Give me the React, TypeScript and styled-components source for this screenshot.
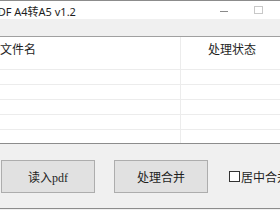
import React from "react";
import styled, { createGlobalStyle } from "styled-components";

const Global = createGlobalStyle`
  html, body { margin: 0; padding: 0; background: #f0f0f0; overflow: hidden; }
  #root { width: 280px; height: 210px; overflow: hidden; }
`;

const Window = styled.div`
  width: 318px;
  margin-left: -9px;
  display: flex;
  flex-direction: column;
  border-top: 1px solid #8c8c8c;
  border-bottom: 1px solid #8c8c8c;
  background: #f0f0f0;
  font-family: "Noto Sans CJK SC", "Noto Sans", sans-serif;
  color: #1e1e1e;
`;

const TitleBar = styled.div`
  height: 18px;
  background: #fff;
  display: flex;
  align-items: center;
  font-family: "Noto Sans", "Noto Sans CJK SC", sans-serif;
  font-size: 11px;
`;

const TitleText = styled.span`
  flex: 1;
  padding-top: 1px;
`;

const Caption = styled.div`
  width: 34px;
  display: flex;
  justify-content: center;
  align-items: center;
`;

const MinIcon = styled.div`
  width: 8px;
  height: 1px;
  background: #8a8a8a;
  margin-top: 2px;
`;

const MaxIcon = styled.div`
  width: 7px;
  height: 6px;
  border: 1px solid #c8c8c8;
`;

const MenuBand = styled.div`
  height: 17px;
  background: #f0f0f0;
  border-bottom: 1px solid #a0a0a0;
`;

const Table = styled.div`
  background: #fff;
  height: 106px;
  border-bottom: 1px solid #8c8c8c;
  display: grid;
  grid-template-columns: 190px 1fr;
  grid-template-rows: 33px repeat(5, 15px);
  overflow: hidden;
`;

const Cell = styled.div<{ $last?: boolean }>`
  border-right: ${(p) => (p.$last ? "none" : "1px solid #ececec")};
  border-bottom: 1px solid #ececec;
  box-sizing: border-box;
  font-size: 12px;
  line-height: 14px;
  padding-top: 5px;
`;

const HeadName = styled(Cell)`
  padding-left: 9px;
`;

const HeadStatus = styled(Cell)`
  padding-left: 27px;
`;

const Footer = styled.div`
  height: 64px;
  display: flex;
  align-items: center;
  gap: 19px;
  padding-left: 10px;
`;

const Button = styled.button<{ $serif?: boolean }>`
  width: 94px;
  height: 33px;
  margin-top: 1px;
  background: #e1e1e1;
  border: 1px solid #adadad;
  font-family: ${(p) =>
    p.$serif ? `"Liberation Serif", "Noto Sans CJK SC", serif` : `"Noto Sans CJK SC", sans-serif`};
  font-size: 12px;
  color: #1e1e1e;
  padding: 0;
`;

const Check = styled.label`
  display: flex;
  align-items: center;
  font-size: 12px;
  gap: 1px;
  margin-left: 2px;
  white-space: nowrap;
`;

const Box = styled.span`
  width: 9px;
  height: 9px;
  border: 1px solid #333;
  background: #fff;
`;

export default function App() {
  const rows = [0, 1, 2, 3, 4];
  return (
    <>
      <Global />
      <Window>
        <TitleBar>
          <TitleText>PDF A4转A5 v1.2</TitleText>
          <Caption>
            <MinIcon />
          </Caption>
          <Caption>
            <MaxIcon />
          </Caption>
          <Caption />
        </TitleBar>
        <MenuBand />
        <Table>
          <HeadName>文件名</HeadName>
          <HeadStatus $last>处理状态</HeadStatus>
          {rows.map((r) => (
            <React.Fragment key={r}>
              <Cell />
              <Cell $last />
            </React.Fragment>
          ))}
        </Table>
        <Footer>
          <Button $serif>读入pdf</Button>
          <Button>处理合并</Button>
          <Check>
            <Box />
            居中合并
          </Check>
        </Footer>
      </Window>
    </>
  );
}
